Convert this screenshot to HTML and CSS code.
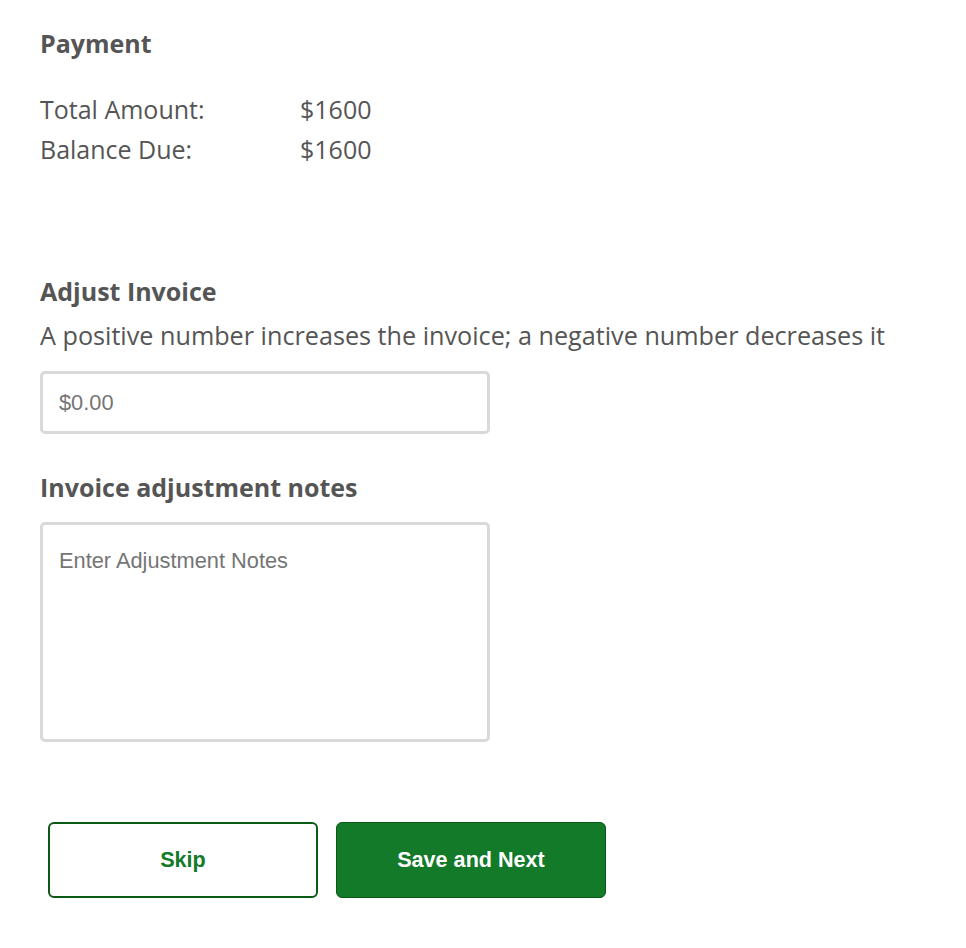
FILE: index.html
```html
<!DOCTYPE html>
<html lang="en">
<head>
  <meta charset="UTF-8">
  <meta name="viewport" content="width=device-width, initial-scale=1.0">
  <title>Payment</title>
  <link rel="stylesheet" href="styles.css">
</head>
<body>
  <div class="page">
    <section class="payment">
      <h2>Payment</h2>
      <div class="summary-row">
        <span class="summary-label">Total Amount:</span>
        <span class="summary-value">$1600</span>
      </div>
      <div class="summary-row">
        <span class="summary-label">Balance Due:</span>
        <span class="summary-value">$1600</span>
      </div>
    </section>

    <section class="adjust">
      <h3>Adjust Invoice</h3>
      <p class="hint">A positive number increases the invoice; a negative number decreases it</p>
      <input type="text" class="field" placeholder="$0.00">

      <h3 class="notes-title">Invoice adjustment notes</h3>
      <textarea class="field notes" placeholder="Enter Adjustment Notes"></textarea>
    </section>

    <div class="actions">
      <button class="btn btn-outline">Skip</button>
      <button class="btn btn-primary">Save and Next</button>
    </div>
  </div>
</body>
</html>
```

FILE: styles.css
```css
body {
  margin: 0;
  font-family: "Open Sans", Arial, sans-serif;
  color: #555;
  background-color: #fff;
}

.page {
  padding: 26px 40px;
}

h2,
h3 {
  font-size: 25px;
  font-weight: 700;
  margin: 0;
  line-height: 34px;
}

.payment h2 {
  margin-bottom: 29px;
}

.summary-row {
  display: flex;
  font-size: 25px;
  line-height: 40px;
}

.summary-label {
  width: 260px;
}

.adjust {
  margin-top: 105px;
}

.hint {
  font-size: 25.2px;
  line-height: 34px;
  margin: 10px 0 19px;
}

.field {
  display: block;
  width: 450px;
  box-sizing: border-box;
  border: 3px solid #d9d9d9;
  border-radius: 5px;
  font-family: Arial, "Liberation Sans", sans-serif;
  font-size: 21.8px;
  color: #333;
  padding: 0 16px;
  outline: none;
}

input.field {
  height: 63px;
}

.field::placeholder {
  color: #757575;
}

.notes-title {
  margin-top: 36px;
  margin-bottom: 18px;
}

.notes {
  height: 220px;
  padding-top: 23px;
  resize: none;
}

.actions {
  display: flex;
  gap: 18px;
  margin-top: 80px;
  padding-left: 8px;
}

.btn {
  width: 270px;
  height: 76px;
  border-radius: 6px;
  font-family: Arial, "Liberation Sans", sans-serif;
  font-size: 21.6px;
  font-weight: 700;
  cursor: pointer;
}

.btn-outline {
  background-color: #fff;
  color: #127a28;
  border: 2px solid #0b5a14;
}

.btn-primary {
  background-color: #127a28;
  color: #fff;
  border: 1px solid #0b5a14;
}
```
